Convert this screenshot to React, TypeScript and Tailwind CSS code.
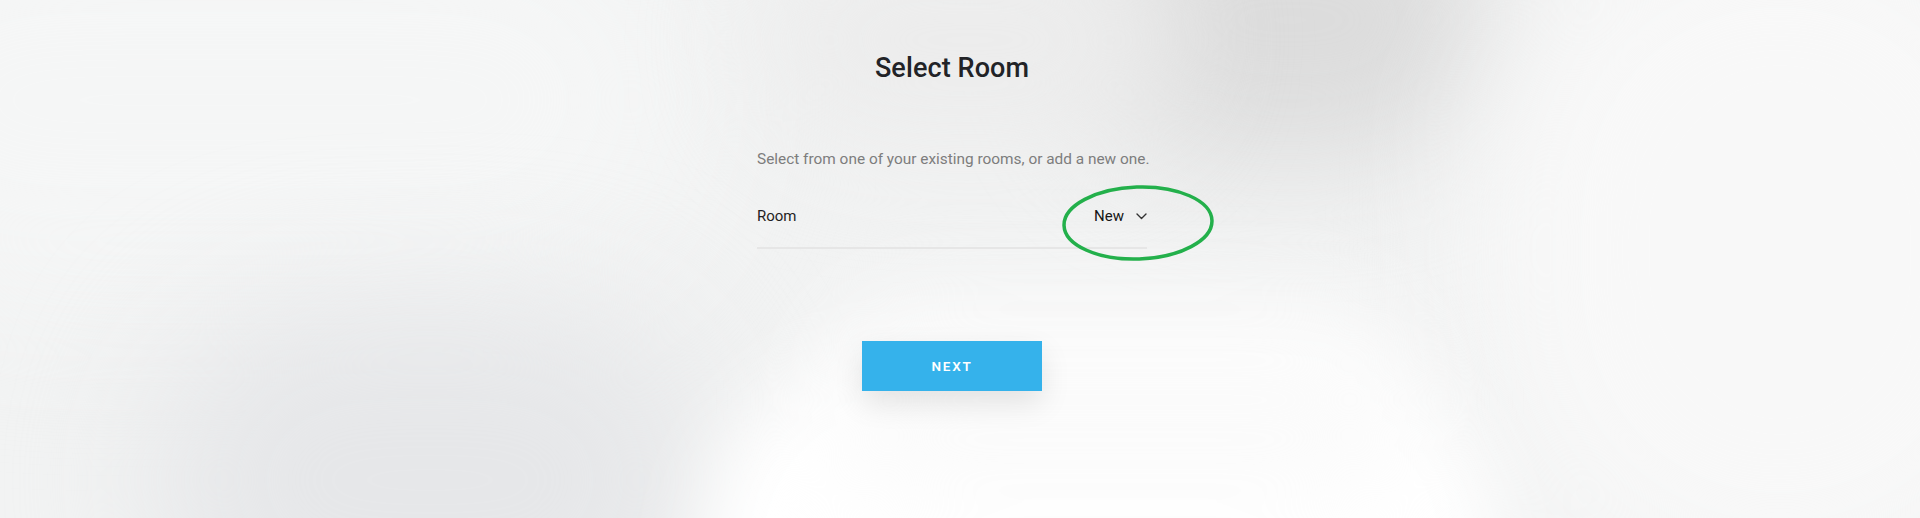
import React from "react";

function Chevron() {
  return (
    <svg width="11" height="7" viewBox="0 0 11 7" fill="none" className="ml-[12px] mt-[1px]">
      <path d="M1 1l4.5 4.5L10 1" stroke="#333" strokeWidth="1.4" strokeLinecap="round" strokeLinejoin="round" />
    </svg>
  );
}

export default function App() {
  return (
    <div className="relative h-[518px] w-[1920px] overflow-hidden bg-[#f2f3f3]" style={{ fontFamily: "Roboto, 'Noto Sans', sans-serif" }}>
      {/* background decoration */}
      <div className="pointer-events-none absolute inset-0">
        <div className="absolute left-[-200px] top-[-100px] h-[400px] w-[900px] rounded-full bg-[#f5f6f6] blur-[80px]" />
        <div className="absolute left-[150px] top-[300px] h-[360px] w-[560px] rounded-full bg-[#e6e7e9] blur-[70px]" />
        <div className="absolute left-[1080px] top-[-120px] h-[280px] w-[420px] rounded-full bg-[#dcdcdc] blur-[60px]" />
        <div className="absolute left-[760px] top-[-60px] h-[200px] w-[420px] rounded-full bg-[#ececec] blur-[60px]" />
        <div className="absolute left-[1480px] top-[-100px] h-[700px] w-[600px] rounded-full bg-[#f8f8f8] blur-[70px]" />
        <div className="absolute left-[700px] top-[350px] h-[400px] w-[800px] rounded-full bg-[#ffffff] blur-[40px]" />
        <div className="absolute left-[820px] top-[300px] h-[200px] w-[600px] rounded-full bg-[#fbfbfb] blur-[50px]" />
      </div>

      <div className="relative flex w-[1904px] flex-col items-center pt-[51px]">
        <h1 className="text-[27px] font-medium leading-[34px] tracking-[0.1px] text-[#222327]">Select Room</h1>

        <div className="mt-[62px] w-[390px]">
          <p className="whitespace-nowrap text-[15.4px] leading-[24px] text-[#7d7d7d]">
            Select from one of your existing rooms, or add a new one.
          </p>
          <div className="mt-[34px] flex items-center justify-between border-b-2 border-[#e6e6e6] pb-[20px]">
            <span className="text-[15px] leading-[22px] text-[#1f1f1f]">Room</span>
            <span className="flex items-center text-[15px] leading-[22px] text-[#151515]">
              New
              <Chevron />
            </span>
          </div>
        </div>

        <button className="mt-[92px] flex h-[50px] w-[180px] items-center justify-center bg-[#35b2eb] text-[13.5px] font-semibold tracking-[1.8px] text-white shadow-[0_12px_30px_rgba(0,0,0,0.10)]">
          NEXT
        </button>
      </div>

      {/* annotation */}
      <svg className="pointer-events-none absolute left-[1057px] top-[182px]" width="162" height="82" viewBox="0 0 162 82">
        <ellipse cx="81" cy="41" rx="74" ry="36" fill="none" stroke="#23b04b" strokeWidth="3.5" transform="rotate(-2 81 41)" />
      </svg>
    </div>
  );
}
